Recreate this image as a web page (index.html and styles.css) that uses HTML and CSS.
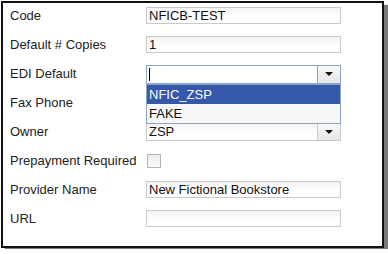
FILE: index.html
```html
<!DOCTYPE html>
<html lang="en">
<head>
    <meta charset="UTF-8">
    <title>Provider</title>
    <link rel="stylesheet" href="styles.css">
</head>
<body>
    <div class="panel">
        <form class="provider-form">
            <label class="field-label">Code</label>
            <input class="text-input" type="text" value="NFICB-TEST">

            <label class="field-label">Default # Copies</label>
            <input class="text-input" type="text" value="1">

            <label class="field-label">EDI Default</label>
            <div class="combo combo-open">
                <span class="combo-value"><span class="caret"></span></span>
                <span class="combo-arrow"></span>
                <ul class="combo-list">
                    <li class="combo-option selected">NFIC_ZSP</li>
                    <li class="combo-option">FAKE</li>
                </ul>
            </div>

            <label class="field-label">Fax Phone</label>
            <input class="text-input" type="text" value="">

            <label class="field-label">Owner</label>
            <div class="combo">
                <span class="combo-value">ZSP</span>
                <span class="combo-arrow"></span>
            </div>

            <label class="field-label">Prepayment Required</label>
            <span class="check-box"></span>

            <label class="field-label">Provider Name</label>
            <input class="text-input" type="text" value="New Fictional Bookstore">

            <label class="field-label">URL</label>
            <input class="text-input" type="text" value="">
        </form>
    </div>
</body>
</html>
```

FILE: styles.css
```css
body {
    margin: 0;
    padding: 1px;
    background: #fff;
    font-family: "Liberation Sans", Arial, sans-serif;
    font-size: 13px;
    color: #222;
}
.panel {
    width: 379px;
    height: 243px;
    border: 2px solid #111;
    background: #fff;
    box-shadow: 4px 4px 1px #7a7a7a;
}
.provider-form {
    display: grid;
    grid-template-columns: 136px 195px;
    grid-auto-rows: 17px;
    row-gap: 12px;
    padding: 4px 0 0 7px;
}
.field-label {
    align-self: center;
    white-space: nowrap;
    line-height: 17px;
}
.text-input {
    box-sizing: border-box;
    width: 195px;
    height: 17px;
    margin: 0;
    padding: 0 2px;
    border: 1px solid #c9c9c9;
    background: linear-gradient(to bottom, #f3f3f3, #fff 60%);
    font-family: inherit;
    font-size: 13px;
    color: #111;
    outline: none;
}
.combo {
    position: relative;
    box-sizing: border-box;
    display: flex;
    height: 18px;
    border: 1px solid #c9c9c9;
    background: linear-gradient(to bottom, #f3f3f3, #fff 60%);
}
.combo-open {
    height: 19px;
    border-color: #8aa6c9;
    background: #fff;
}
.combo-value {
    flex: 1;
    padding-left: 2px;
    line-height: 16px;
    color: #111;
}
.caret {
    display: inline-block;
    width: 1px;
    height: 13px;
    margin-top: 2px;
    background: #000;
    vertical-align: top;
}
.combo-arrow {
    position: relative;
    width: 22px;
    border-left: 1px solid #c9c9c9;
    background: linear-gradient(to bottom, #fafafa, #e6e6e6);
}
.combo-open .combo-arrow {
    border-left-color: #8aa6c9;
}
.combo-arrow::after {
    content: "";
    position: absolute;
    left: 7px;
    top: 6px;
    border-left: 4px solid transparent;
    border-right: 4px solid transparent;
    border-top: 4px solid #111;
}
.combo-list {
    position: absolute;
    left: -1px;
    top: 18px;
    width: 195px;
    margin: 0;
    padding: 0;
    list-style: none;
    box-sizing: border-box;
    border: 1px solid #8aa6c9;
    background: #f7f7f7;
    z-index: 2;
}
.combo-option {
    height: 19px;
    padding-left: 2px;
    line-height: 19px;
    color: #111;
}
.combo-option.selected {
    background: #3558ab;
    color: #fff;
}
.check-box {
    box-sizing: border-box;
    width: 14px;
    height: 14px;
    margin: 2px 0 0 1px;
    border: 1px solid #b5b5b5;
    background: linear-gradient(to bottom, #ececec, #fafafa);
}
```
